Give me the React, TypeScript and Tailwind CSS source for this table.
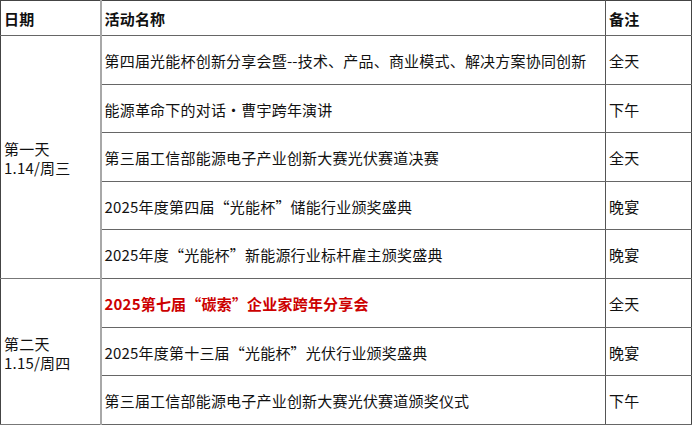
import React from 'react';

interface EventRow {
  name: string;
  note: string;
  highlight?: boolean;
}

interface DayGroup {
  day: string;
  date: string;
  events: EventRow[];
}

const schedule: DayGroup[] = [
  {
    day: '第一天',
    date: '1.14/周三',
    events: [
      { name: '第四届光能杯创新分享会暨--技术、产品、商业模式、解决方案协同创新', note: '全天' },
      { name: '能源革命下的对话·曹宇跨年演讲', note: '下午' },
      { name: '第三届工信部能源电子产业创新大赛光伏赛道决赛', note: '全天' },
      { name: '2025年度第四届“光能杯”储能行业颁奖盛典', note: '晚宴' },
      { name: '2025年度“光能杯”新能源行业标杆雇主颁奖盛典', note: '晚宴' },
    ],
  },
  {
    day: '第二天',
    date: '1.15/周四',
    events: [
      { name: '2025第七届“碳索”企业家跨年分享会', note: '全天', highlight: true },
      { name: '2025年度第十三届“光能杯”光伏行业颁奖盛典', note: '晚宴' },
      { name: '第三届工信部能源电子产业创新大赛光伏赛道颁奖仪式', note: '下午' },
    ],
  },
];

const App: React.FC = () => {
  return (
    <div
      lang="zh-CN"
      className="w-[692px] h-[426px] bg-white text-[#111] text-[15px] tracking-[0.2px] font-['Noto_Sans_CJK_SC','Noto_Sans',sans-serif]"
    >
      <table className="w-[691px] border-collapse table-fixed border border-[#444]">
        <colgroup>
          <col className="w-[100px]" />
          <col className="w-[505px]" />
          <col className="w-[86px]" />
        </colgroup>
        <thead>
          <tr className="h-[35px]">
            <th className="border-r-2 border-r-[#a8a8a8] border-b border-b-[#666] text-left font-bold px-[3px] pt-[2px]">日期</th>
            <th className="border-r border-[#555] border-b border-b-[#666] text-left font-bold px-[3px] pt-[2px]">活动名称</th>
            <th className="border-b border-b-[#666] text-left font-bold px-[3px] pt-[2px]">备注</th>
          </tr>
        </thead>
        <tbody>
          {schedule.map((group, gi) =>
            group.events.map((ev, i) => (
              <tr key={`${gi}-${i}`} className="h-[48.6px]">
                {i === 0 && (
                  <td
                    rowSpan={group.events.length}
                    className="border-r-2 border-r-[#a8a8a8] border-b border-b-[#777] align-middle px-[3px] leading-[19px] pt-[3px]"
                  >
                    <div>{group.day}</div>
                    <div>{group.date}</div>
                  </td>
                )}
                <td
                  className={`border-r border-[#555] border-b border-b-[#666] px-[3px] pt-[3px] align-middle whitespace-nowrap ${
                    ev.highlight ? 'text-[#cc0000] font-bold' : ''
                  }`}
                >
                  {ev.name}
                </td>
                <td className="border-b border-b-[#666] px-[3px] pt-[3px] align-middle">{ev.note}</td>
              </tr>
            ))
          )}
        </tbody>
      </table>
    </div>
  );
};

export default App;
